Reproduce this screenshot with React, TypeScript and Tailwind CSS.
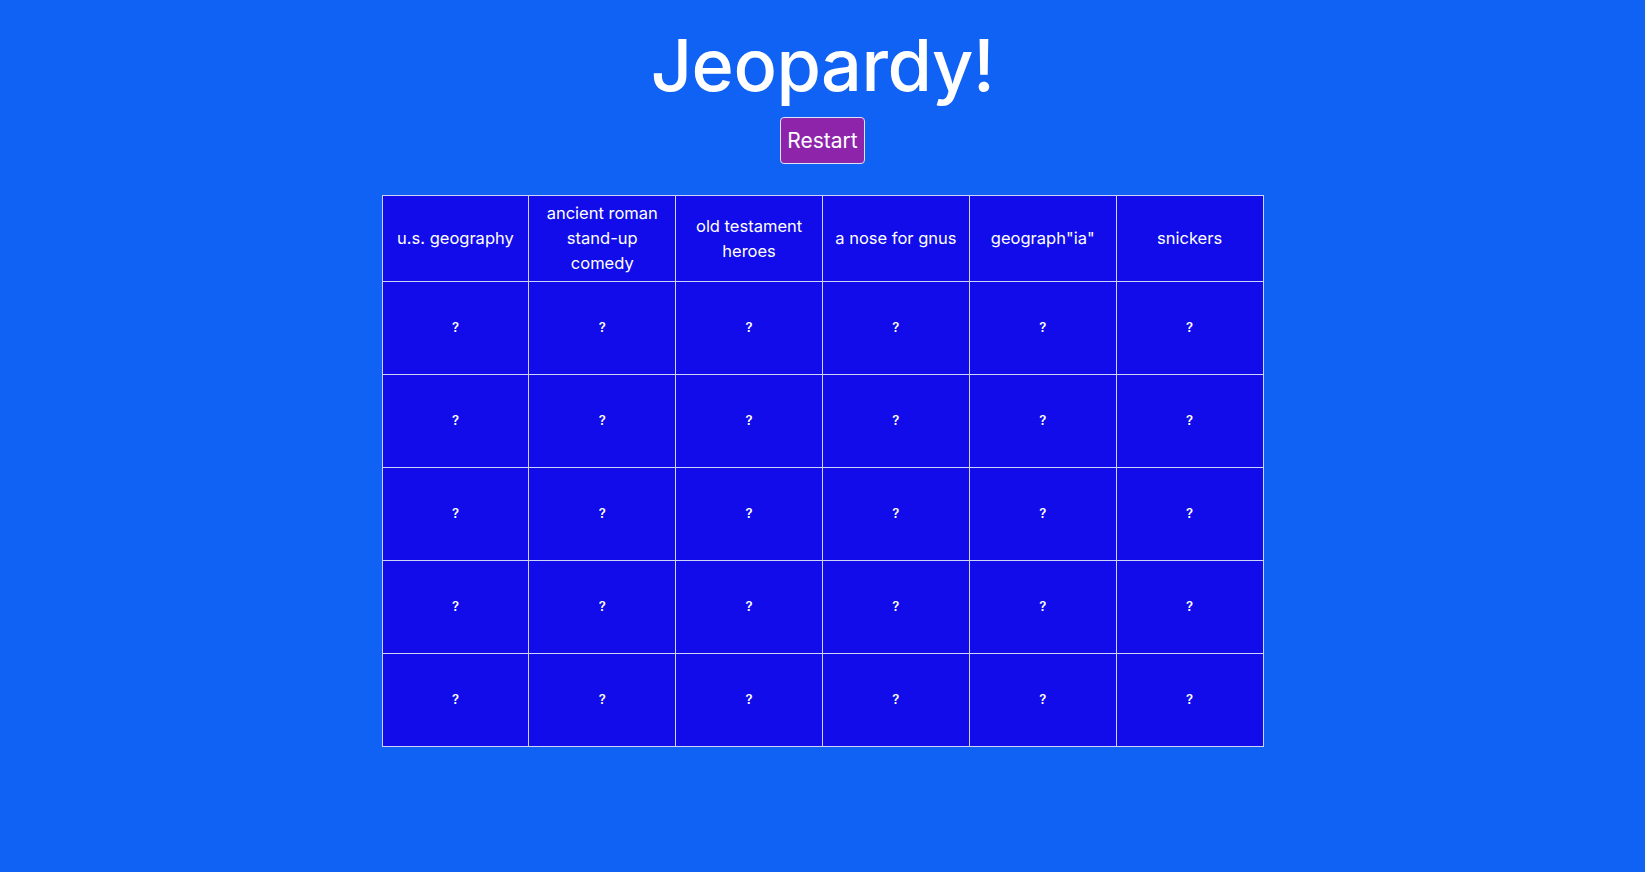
import React from 'react';

const categories = [
  'u.s. geography',
  'ancient roman stand-up comedy',
  'old testament heroes',
  'a nose for gnus',
  'geograph"ia"',
  'snickers',
];

const rows = [0, 1, 2, 3, 4];

export default function App() {
  return (
    <div
      className="min-h-screen w-full bg-[#1062f4] flex flex-col items-center text-white"
      style={{ fontFamily: 'Inter, "Liberation Sans", Arial, sans-serif' }}
    >
      <h1 className="pt-[21px] text-[72px] leading-[87px] font-medium tracking-[-0.5px]">Jeopardy!</h1>
      <button className="mt-[9px] bg-[#8e24aa] border border-[#dfe3f7] rounded-[4px] px-[6px] py-[10px] text-[21px] leading-[25px] text-white">
        Restart
      </button>

      <table className="mt-[31px] w-[882px] table-fixed border-collapse">
        <thead>
          <tr>
            {categories.map((c) => (
              <th
                key={c}
                className="h-[86px] border border-[#cfd3f5] bg-[#110ce9] px-[10px] text-[16.5px] leading-[25px] font-normal text-center align-middle"
              >
                {c}
              </th>
            ))}
          </tr>
        </thead>
        <tbody>
          {rows.map((r) => (
            <tr key={r}>
              {categories.map((c) => (
                <td
                  key={c}
                  className="h-[93px] border border-[#cfd3f5] bg-[#110ce9] text-center align-middle text-[13px] font-semibold"
                >
                  ?
                </td>
              ))}
            </tr>
          ))}
        </tbody>
      </table>
    </div>
  );
}
